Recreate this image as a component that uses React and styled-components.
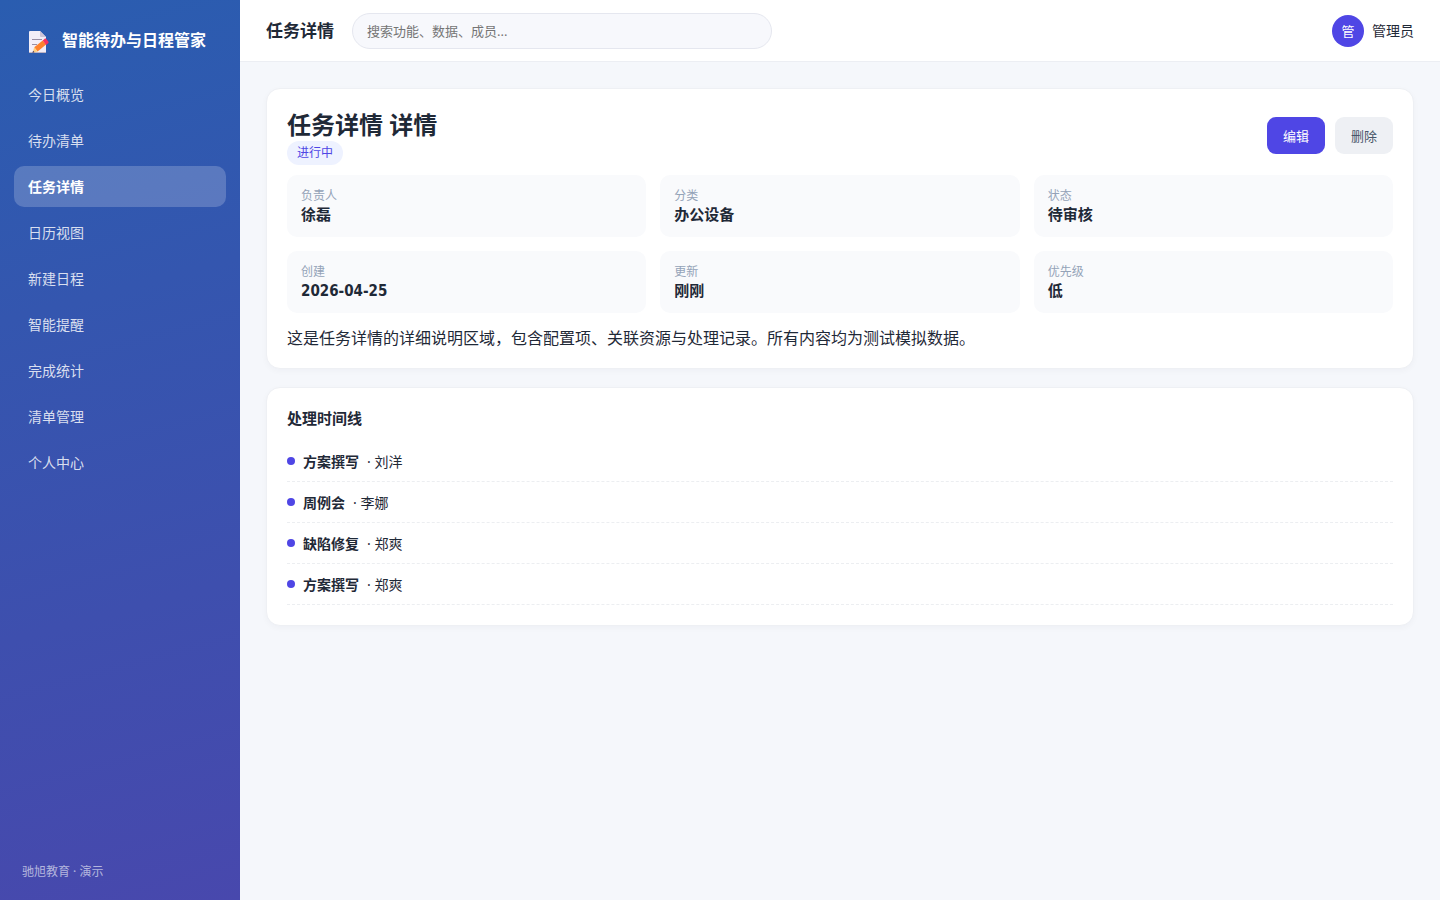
import React from 'react'
import styled, { createGlobalStyle } from 'styled-components'

const navItems = [
  '今日概览',
  '待办清单',
  '任务详情',
  '日历视图',
  '新建日程',
  '智能提醒',
  '完成统计',
  '清单管理',
  '个人中心',
]

const fields = [
  { label: '负责人', value: '徐磊' },
  { label: '分类', value: '办公设备' },
  { label: '状态', value: '待审核' },
  { label: '创建', value: '2026-04-25' },
  { label: '更新', value: '刚刚' },
  { label: '优先级', value: '低' },
]

const timeline = [
  { id: 1, title: '方案撰写', user: '刘洋' },
  { id: 2, title: '周例会', user: '李娜' },
  { id: 3, title: '缺陷修复', user: '郑爽' },
  { id: 4, title: '方案撰写', user: '郑爽' },
]

const MemoIcon = () => (
  <svg width="22" height="24" viewBox="0 0 22 24" aria-hidden="true">
    <path d="M2 1h10l6 6v15a1 1 0 0 1-1 1H2a1 1 0 0 1-1-1V2a1 1 0 0 1 1-1z" fill="#f3eef8" />
    <path d="M12 1l6 6h-5a1 1 0 0 1-1-1z" fill="#cdc4d6" />
    <path d="M1 22h17v1H1z" fill="#bdb3c4" />
    <path d="M4 9h10v1H4zM4 14h5v1H4z" fill="#998ea4" />
    <path d="M6.200 17.200L14.700 10.400l3.400 4.200L9.600 21.400z" fill="#ff822d" />
    <path d="M6.200 17.200L9.600 21.400l-5 1.400z" fill="#ffce7c" />
    <path d="M5.100 20.800l1.500 1.500-2.200.6z" fill="#433b6b" />
    <path d="M14.700 10.400l1.800-1.500c.6-.5 1.300-.4 1.800.1l2 2.500c.5.6.4 1.300-.2 1.800l-2 1.600z" fill="#f8315f" />
  </svg>
)

const App = () => {
  return (
    <>
      <GlobalStyle />
      <Layout>
        <Sidebar>
          <Brand>
            <MemoIcon />
            <span>智能待办与日程管家</span>
          </Brand>
          <Nav>
            {navItems.map((item) => (
              <NavLink key={item} href="#" $active={item === '任务详情'}>
                {item}
              </NavLink>
            ))}
          </Nav>
          <SideFooter>驰旭教育 · 演示</SideFooter>
        </Sidebar>

        <Main>
          <Topbar>
            <PageTitle>任务详情</PageTitle>
            <Search type="search" aria-label="搜索" placeholder="搜索功能、数据、成员..." />
            <User>
              <Avatar>管</Avatar>
              <span>管理员</span>
            </User>
          </Topbar>

          <Content>
            <Card>
              <CardHead>
                <div>
                  <DetailTitle>任务详情 详情</DetailTitle>
                  <Badge>进行中</Badge>
                </div>
                <Actions>
                  <Button type="button" $primary>编辑</Button>
                  <Button type="button">删除</Button>
                </Actions>
              </CardHead>
              <FieldGrid>
                {fields.map((field) => (
                  <Field key={field.label}>
                    <dt>{field.label}</dt>
                    <dd>{field.value}</dd>
                  </Field>
                ))}
              </FieldGrid>
              <Description>
                这是任务详情的详细说明区域，包含配置项、关联资源与处理记录。所有内容均为测试模拟数据。
              </Description>
            </Card>

            <Card>
              <SectionTitle>处理时间线</SectionTitle>
              <Timeline>
                {timeline.map((item) => (
                  <TimelineItem key={item.id}>
                    <Dot />
                    <strong>{item.title}</strong>
                    <span>· {item.user}</span>
                  </TimelineItem>
                ))}
              </Timeline>
            </Card>
          </Content>
        </Main>
      </Layout>
    </>
  )
}

const GlobalStyle = createGlobalStyle`
  * {
    box-sizing: border-box;
    margin: 0;
    padding: 0;
  }

  body {
    font-family: "Noto Sans", "Noto Sans CJK SC", sans-serif;
    font-size: 14px;
    line-height: 20px;
    color: #1f2937;
    background: #f5f7fb;
  }

  button, input {
    font-family: inherit;
  }
`;

const Layout = styled.div`
  display: flex;
  min-height: 100vh;
`;

const Sidebar = styled.aside`
  display: flex;
  flex-direction: column;
  flex: 0 0 240px;
  padding: 22px 14px 18px;
  color: #ffffff;
  background: linear-gradient(165deg, #2a5db0, #4848ad);
`;

const Brand = styled.div`
  display: flex;
  align-items: center;
  gap: 12px;
  height: 36px;
  padding: 0 14px;
  margin-bottom: 16px;
  font-size: 16px;
  font-weight: 700;
  white-space: nowrap;

  svg {
    flex-shrink: 0;
    margin-top: 4px;
  }
`;

const Nav = styled.nav`
  display: flex;
  flex-direction: column;
  gap: 5px;
`;

const NavLink = styled.a`
  padding: 10px 14px;
  line-height: 21px;
  border-radius: 10px;
  text-decoration: none;
  color: ${({ $active }) => ($active ? '#ffffff' : 'rgba(255, 255, 255, 0.82)')};
  font-weight: ${({ $active }) => ($active ? 700 : 400)};
  background: ${({ $active }) => ($active ? 'rgba(255, 255, 255, 0.2)' : 'transparent')};
`;

const SideFooter = styled.div`
  margin-top: auto;
  padding: 0 8px;
  font-size: 12px;
  color: rgba(255, 255, 255, 0.6);
`;

const Main = styled.div`
  flex: 1;
  min-width: 0;
`;

const Topbar = styled.header`
  display: flex;
  align-items: center;
  gap: 18px;
  height: 62px;
  padding: 0 26px;
  background: #ffffff;
  border-bottom: 1px solid #eceef3;
`;

const PageTitle = styled.h1`
  font-size: 17px;
  font-weight: 700;
  white-space: nowrap;
`;

const Search = styled.input`
  flex: 0 1 420px;
  min-width: 0;
  height: 36px;
  padding: 0 14px;
  font-size: 13px;
  color: inherit;
  background: #f7f8fc;
  border: 1px solid #e5e7ef;
  border-radius: 18px;
  appearance: none;

  &::placeholder {
    color: #757575;
  }
`;

const User = styled.div`
  display: flex;
  align-items: center;
  gap: 8px;
  margin-left: auto;
  white-space: nowrap;
`;

const Avatar = styled.span`
  display: grid;
  place-items: center;
  width: 32px;
  height: 32px;
  font-size: 13px;
  color: #ffffff;
  background: #4f46e5;
  border-radius: 50%;
`;

const Content = styled.main`
  display: flex;
  flex-direction: column;
  gap: 18px;
  padding: 26px;
`;

const Card = styled.section`
  padding: 20px;
  background: #ffffff;
  border: 1px solid #eef0f4;
  border-radius: 14px;
  box-shadow: 0 2px 6px rgba(30, 41, 59, 0.03);
`;

const CardHead = styled.div`
  display: flex;
  justify-content: space-between;
  align-items: flex-start;
  margin-bottom: 10px;
`;

const DetailTitle = styled.h2`
  font-size: 24px;
  font-weight: 700;
  line-height: 32px;
`;

const Badge = styled.span`
  display: block;
  width: fit-content;
  padding: 2px 10px;
  font-size: 12px;
  color: #4f46e5;
  background: #eef2ff;
  border-radius: 12px;
`;

const Actions = styled.div`
  display: flex;
  gap: 10px;
  padding-top: 8px;
`;

const Button = styled.button`
  height: 37px;
  padding: 0 16px;
  font-size: 13px;
  color: ${({ $primary }) => ($primary ? '#ffffff' : '#475569')};
  background: ${({ $primary }) => ($primary ? '#4f46e5' : '#eef0f4')};
  border: none;
  border-radius: 9px;
  cursor: pointer;
`;

const FieldGrid = styled.dl`
  display: grid;
  grid-template-columns: repeat(3, 1fr);
  gap: 14px;
`;

const Field = styled.div`
  padding: 12px 14px;
  background: #f9fafc;
  border-radius: 10px;

  dt {
    font-size: 12px;
    line-height: 18px;
    color: #94a3b8;
  }

  dd {
    font-family: "DejaVu Sans Condensed", "Noto Sans CJK SC", sans-serif;
    font-size: 15px;
    font-weight: 700;
  }
`;

const Description = styled.p`
  margin-top: 15px;
  font-size: 16px;
  line-height: 20px;
`;

const SectionTitle = styled.h3`
  margin-bottom: 13px;
  font-size: 15px;
  font-weight: 700;
`;

const Timeline = styled.ul`
  list-style: none;
`;

const TimelineItem = styled.li`
  display: flex;
  align-items: center;
  gap: 8px;
  padding: 11px 0 9px;
  border-bottom: 1px dashed #eceef1;
`;

const Dot = styled.i`
  width: 8px;
  height: 8px;
  margin-bottom: 2px;
  background: #4f46e5;
  border-radius: 50%;
`;

export default App
